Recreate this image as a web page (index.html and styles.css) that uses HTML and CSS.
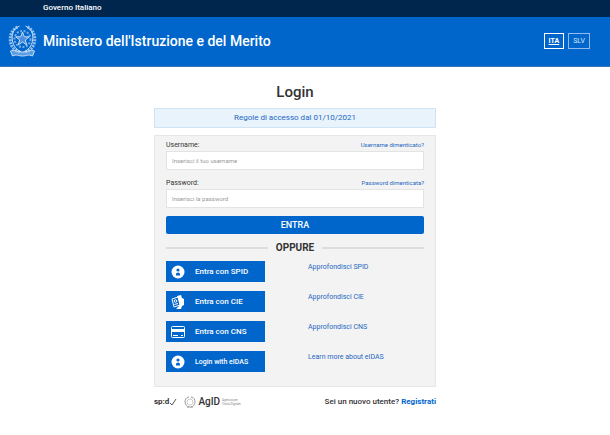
FILE: index.html
```html
<!DOCTYPE html>
<html lang="it">
<head>
    <meta charset="UTF-8">
    <meta name="viewport" content="width=device-width, initial-scale=1.0">
    <title>Login</title>
    <link rel="stylesheet" href="styles.css">
</head>
<body>
    <div class="topbar">Governo Italiano</div>

    <header class="header">
        <svg class="emblem" viewBox="0 0 28 34" fill="none" stroke="currentColor">
            <path d="M9 3C3 6 1 12 2 18c1 6 5 9 10 10M19 3c6 3 8 9 7 15-1 6-5 9-10 10" stroke-width="3" stroke-dasharray="2 1" opacity=".75"/>
            <path d="M11 2C4 5 3 11 4 17c1 5 4 9 9 11M17 2c7 3 8 9 7 15-1 5-4 9-9 11" stroke-width="1"/>
            <circle cx="14" cy="15" r="8" stroke-dasharray="2 1.500" stroke-width="2" opacity=".6"/>
            <path d="M14 8l1.800 4.800h5l-4 3.200 1.500 5-4.300-3-4.300 3 1.500-5-4-3.200h5z" fill="#4a8fe0" stroke-width="1"/>
            <path d="M2 27c4-2 6 1 12 1s8-3 12-1l-2 5c-4-2-6 0-10 0s-6-2-10 0z" fill="currentColor" fill-opacity=".45" stroke-width="1"/>
        </svg>
        <div class="site-name">Ministero dell'Istruzione e del Merito</div>
        <nav class="languages">
            <a href="#" class="active">ITA</a>
            <a href="#">SLV</a>
        </nav>
    </header>

    <main class="main">
        <div class="content">
            <h1>Login</h1>
            <a href="#" class="notice">Regole di accesso dal 01/10/2021</a>

            <div class="panel">
                <form>
                    <div class="field-head">
                        <label for="username">Username:</label>
                        <a href="#">Username dimenticato?</a>
                    </div>
                    <input type="text" id="username" placeholder="Inserisci il tuo username">
                    <div class="field-head">
                        <label for="password">Password:</label>
                        <a href="#">Password dimenticata?</a>
                    </div>
                    <input type="password" id="password" placeholder="Inserisci la password">
                    <button type="submit" class="submit">ENTRA</button>
                </form>

                <div class="divider">OPPURE</div>

                <div class="providers">
                    <button type="button" class="provider">
                        <span class="icon">
                            <svg viewBox="0 0 16 16"><circle cx="8" cy="8" r="6.500" fill="#fff"/><circle cx="8" cy="6" r="1.600" fill="#06c"/><path d="M6 11.500V10q0-1.500 2-1.500t2 1.500v1.500z" fill="#06c"/></svg>
                        </span>
                        <span class="name">Entra con SPID</span>
                    </button>
                    <a href="#">Approfondisci SPID</a>

                    <button type="button" class="provider">
                        <span class="icon">
                            <svg viewBox="0 0 16 16"><path d="M7 2l4-1 1 3 2 1v6l-2 1-1 3H6l3-3z" fill="#fff"/><path d="M2 5l6-2 2 8-6 2z" fill="#06c" stroke="#fff"/><circle cx="5.500" cy="7" r="1.300" fill="none" stroke="#fff"/><path d="M4.500 10.500l3.500-1" stroke="#fff"/></svg>
                        </span>
                        <span class="name">Entra con CIE</span>
                    </button>
                    <a href="#">Approfondisci CIE</a>

                    <button type="button" class="provider">
                        <span class="icon">
                            <svg viewBox="0 0 16 16"><rect x="1.500" y="2.500" width="13" height="11" rx="1" fill="none" stroke="#fff"/><path d="M2 5h12v3H2z" fill="#fff"/><path d="M3 11.500h5M11 11.500h2" stroke="#fff"/></svg>
                        </span>
                        <span class="name">Entra con CNS</span>
                    </button>
                    <a href="#">Approfondisci CNS</a>

                    <button type="button" class="provider">
                        <span class="icon">
                            <svg viewBox="0 0 16 16"><circle cx="8" cy="8" r="6.500" fill="#fff"/><circle cx="8" cy="6" r="1.600" fill="#06c"/><path d="M6 11.500V10q0-1.500 2-1.500t2 1.500v1.500z" fill="#06c"/></svg>
                        </span>
                        <span class="name small">Login with eIDAS</span>
                    </button>
                    <a href="#">Learn more about eIDAS</a>
                </div>
            </div>

            <footer class="footer">
                <div class="spid">sp:d
                    <svg viewBox="0 0 8 10"><path d="M1 6l2 2 4-6" fill="none" stroke="#555"/></svg>
                </div>
                <div class="agid">
                    <svg viewBox="0 0 12 12" fill="none" stroke="#999"><path d="M5 1C2 1 1 4 1 6s2 5 4 5M7 1c3 0 4 3 4 5s-2 5-4 5"/><circle cx="6" cy="6" r="3" stroke="#ccc"/><path d="M3 11h6"/></svg>
                    <span class="agid-name">AgID</span>
                    <span class="agid-text">Agenzia per<br>l'Italia Digitale</span>
                </div>
                <div class="register">Sei un nuovo utente? <a href="#">Registrati</a></div>
            </footer>
        </div>
    </main>
</body>
</html>
```

FILE: styles.css
```css
* {
    box-sizing: border-box;
}

body {
    margin: 0;
    font-family: Roboto, "Noto Sans", sans-serif;
    font-size: 7px;
    line-height: 10px;
    color: #333;
    background-color: #fff;
}

a {
    color: #2467c2;
    text-decoration: none;
}

.topbar {
    padding: 3px 20px 4px 43px;
    background-color: #00264d;
    color: #fff;
    font-size: 8px;
    font-weight: 500;
}

.header {
    display: flex;
    align-items: center;
    gap: 6px;
    height: 50px;
    padding: 0 20px 2px 8px;
    background-color: #06c;
    border-bottom: 1px solid #3b74b8;
    color: #fff;
}

.emblem {
    width: 29px;
    height: 34px;
    color: #c5ddf8;
}

.site-name {
    font-size: 14px;
    line-height: 18px;
    font-weight: 500;
}

.languages {
    display: flex;
    gap: 4px;
    margin-left: auto;
}

.languages a {
    padding: 2px 4px;
    border: 1px solid #8ebcf0;
    color: #d5e6fa;
}

.languages .active {
    border-color: #fff;
    color: #fff;
    font-weight: 700;
    text-decoration: underline;
}

.main {
    padding: 15px 20px 24px 0;
}

.content {
    max-width: 282px;
    margin: 0 auto;
}

h1 {
    margin: 0 0 6px;
    font-size: 15px;
    line-height: 20px;
    font-weight: 500;
    text-align: center;
}

.notice {
    display: block;
    padding: 4px;
    border: 1px solid #cfe3f5;
    background-color: #e9f3fb;
    font-size: 8px;
    text-align: center;
}

.panel {
    margin-top: 7px;
    padding: 4px 11px 14px;
    border: 1px solid #e6e6e6;
    background-color: #f3f3f3;
}

.field-head {
    display: flex;
    justify-content: space-between;
    margin-bottom: 1px;
}

.field-head a {
    font-size: 6px;
}

input {
    display: block;
    width: 100%;
    height: 19px;
    margin-bottom: 8px;
    padding: 0 5px;
    border: 1px solid #e3e3e3;
    background-color: #fff;
    font-family: inherit;
    font-size: 6px;
}

input::placeholder {
    color: #999;
}

button {
    border: none;
    background-color: #06c;
    color: #fff;
    font-family: inherit;
    font-weight: 500;
    cursor: pointer;
}

.submit {
    display: block;
    width: 100%;
    height: 18px;
    border-radius: 2px;
    font-size: 9px;
}

.divider {
    display: flex;
    align-items: center;
    gap: 8px;
    margin: 7px 0 6px;
    font-size: 10px;
    line-height: 14px;
    font-weight: 700;
}

.divider::before,
.divider::after {
    content: "";
    flex: 1;
    height: 2px;
    background-color: #ddd;
}

.providers {
    display: grid;
    grid-template-columns: 99px 1fr;
    gap: 9px 43px;
}

.providers a {
    padding-top: 1px;
}

.provider {
    display: flex;
    align-items: center;
    height: 21px;
    padding: 0;
    text-align: left;
}

.icon {
    display: flex;
    align-items: center;
    justify-content: center;
    width: 25px;
    height: 21px;
    border-right: 1px solid #1a5fb0;
}

.icon svg {
    width: 16px;
    height: 16px;
}

.name {
    padding-left: 4px;
    font-size: 8px;
}

.small {
    font-size: 7px;
}

.footer {
    display: flex;
    align-items: center;
    gap: 7px;
    margin-top: 9px;
    line-height: 12px;
}

.spid {
    display: flex;
    align-items: center;
    font-size: 8px;
    font-weight: 700;
}

.spid svg {
    width: 8px;
    height: 10px;
}

.agid {
    display: flex;
    align-items: center;
    gap: 2px;
}

.agid svg {
    width: 12px;
    height: 12px;
}

.agid-name {
    font-size: 10px;
    font-weight: 500;
}

.agid-text {
    color: #888;
    font-size: 3px;
    line-height: 4px;
}

.register {
    margin-left: auto;
    font-size: 8px;
    font-weight: 500;
}

.register a {
    color: #06c;
    font-weight: 700;
}
```
